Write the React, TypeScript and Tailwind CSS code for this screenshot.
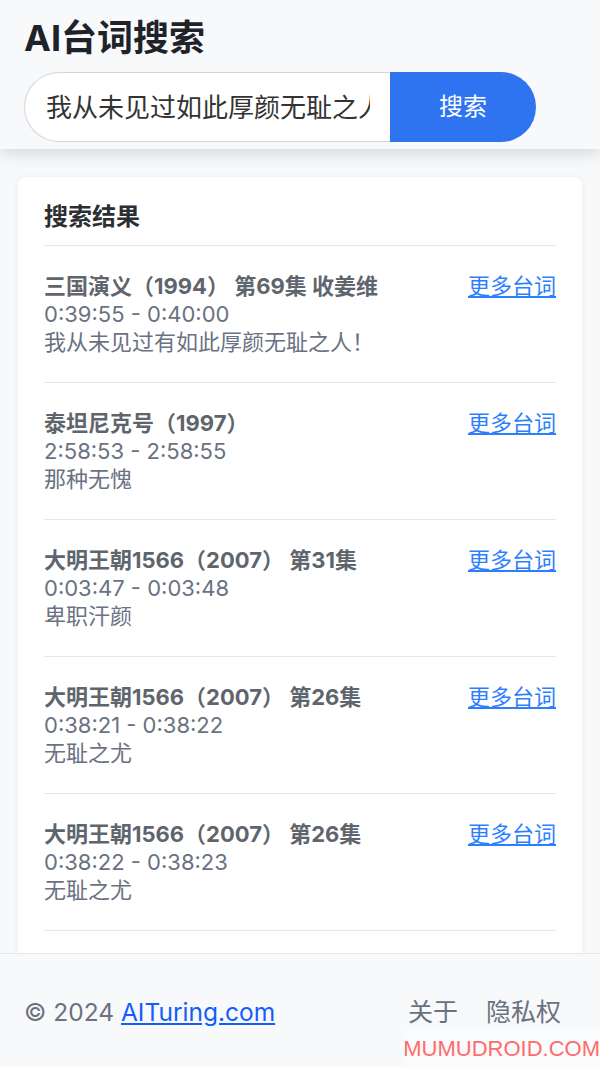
const results = [
  { title: "三国演义（1994） 第69集 收姜维", time: "0:39:55 - 0:40:00", line: "我从未见过有如此厚颜无耻之人！" },
  { title: "泰坦尼克号（1997）", time: "2:58:53 - 2:58:55", line: "那种无愧" },
  { title: "大明王朝1566（2007） 第31集", time: "0:03:47 - 0:03:48", line: "卑职汗颜" },
  { title: "大明王朝1566（2007） 第26集", time: "0:38:21 - 0:38:22", line: "无耻之尤" },
  { title: "大明王朝1566（2007） 第26集", time: "0:38:22 - 0:38:23", line: "无耻之尤" },
];

const font = "font-['Inter','Noto_Sans_CJK_SC',sans-serif]";

export default function App() {
  return (
    <div className={`flex flex-col h-screen bg-[#f8f9fa] ${font}`}>
      <header className="relative z-10 bg-[#f8f9fa] px-6 pt-[18px] pb-[7px] shadow-[0_6px_14px_rgba(0,0,0,0.12)]">
        <h1 className="text-[36px] leading-[40px] font-bold text-[#1f2329]">AI台词搜索</h1>
        <div className="flex mt-[14px] w-[512px] h-[70px]">
          <div className="flex items-center flex-1 min-w-0 bg-white border border-gray-300 border-r-0 rounded-l-full pl-[21px] pr-5">
            <div className="overflow-hidden">
              <span className="text-[26px] text-[#333] whitespace-nowrap">我从未见过如此厚颜无耻之人</span>
            </div>
          </div>
          <button className="w-[146px] bg-[#2e74f1] text-white text-[24px] rounded-r-full">搜索</button>
        </div>
      </header>

      <main className="flex-1 min-h-0 overflow-hidden px-[18px] pt-7">
        <div className="bg-white rounded-lg shadow-[0_0_6px_rgba(0,0,0,0.06)] px-[26px] pt-6 pb-12">
          <h2 className="text-[24px] leading-8 font-bold text-[#2b2f33] pb-3 border-b border-gray-200">搜索结果</h2>
          {results.map((r, i) => (
            <div key={i} className="flex justify-between py-[26px] border-b border-gray-200">
              <div className="text-[22px] leading-7 text-gray-500">
                <div className="font-bold text-[#5f656d]">{r.title}</div>
                <div>{r.time}</div>
                <div>{r.line}</div>
              </div>
              <a href="#" className="text-[22px] leading-7 text-blue-500 underline whitespace-nowrap">更多台词</a>
            </div>
          ))}
        </div>
      </main>

      <footer className="relative h-[114px] shrink-0 border-t border-gray-200 bg-[#f8f9fa] flex items-center justify-between pl-6 pr-[39px] pt-[4px] text-[24.5px] text-gray-500">
        <div>
          © 2024 <a href="#" className="text-blue-600 underline">AITuring.com</a>
        </div>
        <div className="flex gap-7 text-[25px]">
          <span>关于</span>
          <span>隐私权</span>
        </div>
        <div className="absolute right-0 bottom-0 w-[198px] h-[37px] bg-[#fafbfc] flex items-center justify-end font-['Liberation_Sans',sans-serif] text-[22px] text-[#ff6b6b]">
          MUMUDROID.COM
        </div>
      </footer>
    </div>
  );
}
